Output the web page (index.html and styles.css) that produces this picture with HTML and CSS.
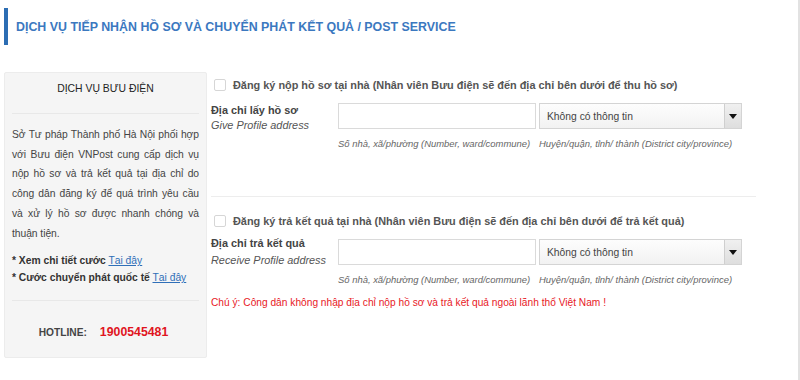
FILE: index.html
```html
<!DOCTYPE html>
<html lang="vi">
<head>
<meta charset="utf-8">
<link rel="stylesheet" href="styles.css">
</head>
<body>
<div class="page">
  <div class="heading"><span class="bar"></span><h1>DỊCH VỤ TIẾP NHẬN HỒ SƠ VÀ CHUYỂN PHÁT KẾT QUẢ / POST SERVICE</h1></div>
  <div class="main">
    <aside class="panel">
      <div class="panel-title">DỊCH VỤ BƯU ĐIỆN</div>
      <div class="panel-body">
        <p class="desc">Sở Tư pháp Thành phố Hà Nội phối hợp với Bưu điện VNPost cung cấp dịch vụ nộp hồ sơ và trả kết quả tại địa chỉ do công dân đăng ký để quá trình yêu cầu và xử lý hồ sơ được nhanh chóng và thuận tiện.</p>
        <p class="links"><b>* Xem chi tiết cước</b> <a href="#">Tại đây</a><br><b>* Cước chuyển phát quốc tế</b> <a href="#">Tại đây</a></p>
      </div>
      <div class="hotline"><span class="hl-label">HOTLINE:</span><span class="hl-num">1900545481</span></div>
    </aside>
    <section class="form">
      <div class="block">
        <label class="check"><span class="box"></span>Đăng ký nộp hồ sơ tại nhà (Nhân viên Bưu điện sẽ đến địa chỉ bên dưới để thu hồ sơ)</label>
        <div class="row">
          <div class="lbl"><b>Địa chỉ lấy hồ sơ</b><i>Give Profile address</i></div>
          <div class="field"><div class="input"></div><div class="hint">Số nhà, xã/phường (Number, ward/commune)</div></div>
          <div class="field sel"><div class="select"><span>Không có thông tin</span><span class="arrow"></span></div><div class="hint">Huyện/quận, tỉnh/ thành (District city/province)</div></div>
        </div>
      </div>
      <div class="block second">
        <label class="check"><span class="box"></span>Đăng ký trả kết quả tại nhà (Nhân viên Bưu điện sẽ đến địa chỉ bên dưới để trả kết quả)</label>
        <div class="row">
          <div class="lbl tall"><b>Địa chỉ trả kết quả</b><i>Receive Profile address</i></div>
          <div class="field"><div class="input"></div><div class="hint">Số nhà, xã/phường (Number, ward/commune)</div></div>
          <div class="field sel"><div class="select"><span>Không có thông tin</span><span class="arrow"></span></div><div class="hint">Huyện/quận, tỉnh/ thành (District city/province)</div></div>
        </div>
        <div class="note">Chú ý: Công dân không nhập địa chỉ nộp hồ sơ và trả kết quả ngoài lãnh thổ Việt Nam !</div>
      </div>
    </section>
  </div>
</div>
</body>
</html>
```
FILE: styles.css
```css
* { box-sizing: border-box; }
html, body { margin: 0; padding: 0; background: #fff; }
body {
  font-family: "Liberation Sans", Arial, sans-serif;
  font-size: 10.9px;
  color: #444;
  width: 800px;
  height: 380px;
  overflow: hidden;
}
.page {
  height: 380px;
  border-right: 2px solid #e2e2e2;
  padding: 8px 0 0 4px;
}
.heading {
  display: flex;
  align-items: center;
  height: 37px;
}
.bar {
  width: 4px;
  height: 37px;
  background: #2c6db3;
}
.heading h1 {
  margin: 0 0 0 8px;
  font-size: 12.4px;
  font-weight: bold;
  color: #3b78bf;
}
.main {
  display: flex;
  margin-top: 27px;
}
.panel {
  width: 203px;
  height: 286px;
  background: #f5f5f5;
  border: 1px solid #ececec;
  border-radius: 2px;
  display: flex;
  flex-direction: column;
}
.panel-title {
  text-align: center;
  font-size: 10.4px;
  color: #222;
  padding: 10px 0 0;
  height: 41px;
  border-bottom: 1px solid #e8e8e8;
  margin: 0 7px;
}
.panel-body {
  padding: 11px 0 0;
  border-bottom: 1px solid #e8e8e8;
  margin: 0 7px;
  height: 187px;
}
.desc {
  margin: 0;
  text-align: justify;
  line-height: 19.7px;
  font-size: 10.3px;
  letter-spacing: -0.05px;
  color: #444;
}
.links {
  margin: 9px 0 0;
  line-height: 17px;
  font-size: 10.3px;
  color: #333;
}
.links b { font-weight: bold; color: #333; }
.links a { color: #2f6fb8; text-decoration: underline; font-weight: normal; }
.hotline {
  display: flex;
  justify-content: center;
  align-items: center;
  padding: 24px 4px 0 0;
  gap: 13px;
}
.hl-label { font-weight: bold; color: #444; font-size: 10.2px; }
.hl-num { font-weight: bold; color: #e0141e; font-size: 12.3px; }
.form {
  width: 545px;
  margin-left: 4px;
  padding-top: 5px;
}
.block {
  height: 120px;
  border-bottom: 1px solid #ededed;
}
.block.second {
  border-bottom: none;
  padding-top: 16px;
}
.check {
  display: flex;
  align-items: center;
  font-weight: bold;
  color: #555;
  height: 16px;
  padding-left: 3px;
}
.box {
  width: 12px;
  height: 12px;
  border: 1px solid #d6d6d6;
  border-radius: 2px;
  background: #fff;
  margin-right: 7px;
}
.row {
  display: flex;
  margin-top: 10px;
}
.lbl {
  width: 127px;
  display: flex;
  flex-direction: column;
  line-height: 15px;
}
.lbl.tall { line-height: 17px; margin-top: -4px; }
.lbl b { color: #444; }
.lbl i { color: #555; }
.field { width: 198px; }
.field.sel { width: 203px; margin-left: 3px; }
.input {
  height: 26px;
  border: 1px solid #dadada;
  background: #fff;
}
.select {
  height: 26px;
  border: 1px solid #d4d4d4;
  background: linear-gradient(#fdfdfd, #f2f2f2);
  display: flex;
  align-items: center;
  justify-content: space-between;
  padding-left: 7px;
  color: #444;
  font-size: 10.3px;
}
.arrow {
  width: 17px;
  height: 24px;
  border-left: 1px solid #cfcfcf;
  background: linear-gradient(#f0f0f0, #dedede);
  position: relative;
}
.arrow::after {
  content: "";
  position: absolute;
  left: 4px;
  top: 10px;
  border-left: 4px solid transparent;
  border-right: 4px solid transparent;
  border-top: 5px solid #111;
}
.hint {
  font-style: italic;
  font-size: 9.45px;
  color: #666;
  margin-top: 9px;
  white-space: nowrap;
}
.note {
  color: #e8191f;
  font-size: 10.2px;
  margin-top: 12px;
}
```
